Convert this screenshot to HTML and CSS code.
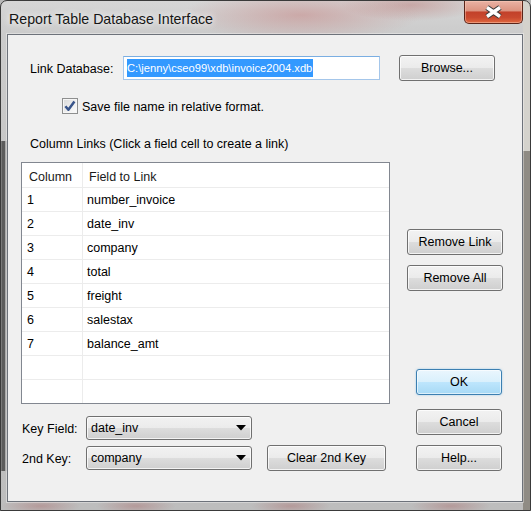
FILE: index.html
```html
<!DOCTYPE html>
<html>
<head>
<meta charset="utf-8">
<title>Report Table Database Interface</title>
<link rel="stylesheet" href="styles.css">
</head>
<body>
<div class="window">
  <div class="titlebar">
    <span class="title">Report Table Database Interface</span>
    <div class="close">
      <svg width="19" height="14" viewBox="0 0 19 14">
        <path d="M3 2.5 L16 11.5 M16 2.5 L3 11.5" stroke="#3a3a3a" stroke-width="5.6" fill="none"/>
        <path d="M3 2.5 L16 11.5 M16 2.5 L3 11.5" stroke="#ffffff" stroke-width="3.4" fill="none"/>
      </svg>
    </div>
  </div>
  <div class="client">
    <div class="link-row">
      <span class="link-lbl">Link Database:</span>
      <div class="textbox"><span class="sel">C:\jenny\cseo99\xdb\invoice2004.xdb</span></div>
      <div class="btn browse">Browse...</div>
    </div>
    <div class="check-row">
      <span class="checkbox">
        <svg width="14" height="14" viewBox="0 0 14 14">
          <path d="M2.4 7.2 L5.4 10.8 L11.4 2.6" stroke="#39548a" stroke-width="2.5" fill="none" stroke-linejoin="round"/>
        </svg>
      </span>
      <span class="check-lbl">Save file name in relative format.</span>
    </div>
    <div class="section-lbl">Column Links (Click a field cell to create a link)</div>
    <div class="main">
      <div class="left">
        <div class="grid">
          <div class="gr head"><div class="c1">Column</div><div class="c2">Field to Link</div></div>
          <div class="gr"><div class="c1">1</div><div class="c2">number_invoice</div></div>
          <div class="gr"><div class="c1">2</div><div class="c2">date_inv</div></div>
          <div class="gr"><div class="c1">3</div><div class="c2">company</div></div>
          <div class="gr"><div class="c1">4</div><div class="c2">total</div></div>
          <div class="gr"><div class="c1">5</div><div class="c2">freight</div></div>
          <div class="gr"><div class="c1">6</div><div class="c2">salestax</div></div>
          <div class="gr"><div class="c1">7</div><div class="c2">balance_amt</div></div>
          <div class="gr"><div class="c1"></div><div class="c2"></div></div>
          <div class="gr"><div class="c1"></div><div class="c2"></div></div>
        </div>
        <div class="keyrow kr1">
          <span class="klbl">Key Field:</span>
          <div class="combo"><span class="ctext">date_inv</span>
            <svg class="arrow" width="10" height="6" viewBox="0 0 10 6"><path d="M0 0 H10 L5 5.5 Z" fill="#000"/></svg>
          </div>
        </div>
        <div class="keyrow kr2">
          <span class="klbl">2nd Key:</span>
          <div class="combo"><span class="ctext">company</span>
            <svg class="arrow" width="10" height="6" viewBox="0 0 10 6"><path d="M0 0 H10 L5 5.5 Z" fill="#000"/></svg>
          </div>
          <div class="btn clear">Clear 2nd Key</div>
        </div>
      </div>
      <div class="right">
        <div class="btn wide rl">Remove Link</div>
        <div class="btn wide ra">Remove All</div>
        <div class="btn narrow ok">OK</div>
        <div class="btn narrow cancel">Cancel</div>
        <div class="btn narrow help">Help...</div>
      </div>
    </div>
  </div>
</div>
</body>
</html>
```

FILE: styles.css
```css
html, body {
  margin: 0;
  padding: 0;
  background: #b8b8b8;
}

body {
  font-family: "Liberation Sans", Arial, sans-serif;
  font-size: 12.5px;
  color: #000;
}

.window {
  width: 531px;
  height: 511px;
  box-sizing: border-box;
  border: 1px solid #3a3a3a;
  border-radius: 7px 7px 0 0;
  padding: 0 7px 8px 6px;
  display: flex;
  flex-direction: column;
  overflow: hidden;
  background:
    radial-gradient(ellipse 120px 26px at 300px 14px, rgba(196, 120, 118, 0.45), rgba(196, 120, 118, 0)),
    radial-gradient(ellipse 70px 16px at 410px 4px, rgba(180, 100, 96, 0.4), rgba(180, 100, 96, 0)),
    radial-gradient(ellipse 40px 8px at 40px 505px, rgba(170, 110, 110, 0.45), rgba(170, 110, 110, 0)),
    radial-gradient(ellipse 40px 8px at 135px 505px, rgba(170, 110, 110, 0.45), rgba(170, 110, 110, 0)),
    radial-gradient(ellipse 40px 8px at 290px 505px, rgba(170, 110, 110, 0.45), rgba(170, 110, 110, 0)),
    radial-gradient(ellipse 40px 8px at 450px 505px, rgba(170, 110, 110, 0.45), rgba(170, 110, 110, 0)),
    linear-gradient(to bottom, #d4d2cc 0, #d4d2cc 150px, #8f8b84 150px) right top / 7px 100% no-repeat,
    linear-gradient(to right, #7a7a7a 0, #7a7a7a 1px, #5c5c5c 1px, #5c5c5c 4px, #a9a9a9 4px) left 140px / 6px 330px no-repeat,
    linear-gradient(to bottom, #d6d6d6 0, #cbcbcb 34px, #c2c2c2 300px, #bdbdbd 100%);
}

.titlebar {
  height: 33px;
  flex: none;
  display: flex;
  justify-content: space-between;
  align-items: flex-start;
  padding-left: 2px;
}

.title {
  margin-top: 10px;
  font-size: 14.2px;
  line-height: 17px;
  color: #151515;
  text-shadow: 0 0 6px rgba(255, 255, 255, 0.9), 0 0 10px rgba(255, 255, 255, 0.7);
}

.close {
  width: 59px;
  height: 23px;
  box-sizing: border-box;
  border: 1px solid #5a2419;
  border-top: none;
  border-radius: 0 0 5px 5px;
  background: linear-gradient(to bottom, #e9b2a4 0%, #dc9380 45%, #c2412a 50%, #c9492f 75%, #e0683f 100%);
  box-shadow: inset 0 0 0 1px rgba(255, 210, 190, 0.45);
  display: flex;
  align-items: center;
  justify-content: center;
}

.client {
  flex: 1;
  border: 1px solid #6d727a;
  background: #f0f0f0;
  box-shadow: 0 0 0 1px rgba(255, 255, 255, 0.35);
  display: flex;
  flex-direction: column;
}

.link-row {
  margin-top: 20px;
  height: 26px;
  padding-left: 22px;
  display: flex;
  align-items: center;
}

.link-lbl {
  width: 93px;
  padding-top: 1px;
}

.textbox {
  width: 257px;
  height: 24px;
  box-sizing: border-box;
  border: 1px solid #a4c6ea;
  border-top-color: #7aaee2;
  background: #fff;
  padding-left: 3px;
  display: flex;
  align-items: center;
}

.sel {
  background: #3399ff;
  color: #fff;
  font-size: 11.2px;
  line-height: 18px;
  padding: 0 1px 0 0;
}

.btn {
  height: 26px;
  box-sizing: border-box;
  border: 1px solid #707070;
  border-radius: 3px;
  background: linear-gradient(to bottom, #f2f2f2 0%, #ebebeb 50%, #dddddd 50%, #cfcfcf 100%);
  box-shadow: inset 0 0 0 1px rgba(255, 255, 255, 0.75);
  display: flex;
  align-items: center;
  justify-content: center;
  color: #000;
}

.browse {
  margin-left: 19px;
  width: 96px;
}

.check-row {
  margin-top: 17px;
  height: 16px;
  padding-left: 54px;
  display: flex;
  align-items: center;
}

.checkbox {
  width: 16px;
  height: 16px;
  box-sizing: border-box;
  border: 1px solid #8e8f8f;
  background: linear-gradient(135deg, #d8d8d8 0%, #f0f0f0 60%, #fbfbfb 100%);
  box-shadow: inset 0 0 0 1px #f6f6f6;
  display: flex;
  align-items: center;
  justify-content: center;
}

.check-lbl {
  margin-left: 4px;
  padding-top: 1px;
}

.section-lbl {
  margin-top: 21px;
  line-height: 16px;
  padding-top: 1px;
  padding-left: 22px;
}

.main {
  margin-top: 10px;
  display: flex;
}

.left {
  padding-left: 13px;
  width: 369px;
}

.grid {
  width: 369px;
  box-sizing: border-box;
  border: 1px solid #828790;
  background: #fff;
}

.gr {
  display: flex;
  height: 24px;
  box-sizing: border-box;
  border-bottom: 1px solid #ececec;
  line-height: 22px;
  padding-top: 1px;
}

.gr:last-child {
  height: 23px;
  border-bottom: none;
}

.gr.head {
  height: 25px;
  line-height: 24px;
  padding-top: 2px;
  color: #1a1a1a;
}

.c1 {
  width: 61px;
  box-sizing: border-box;
  border-right: 1px solid #ececec;
  padding-left: 5px;
  margin-top: -1px;
  padding-top: 1px;
}

.c2 {
  padding-left: 4px;
}

.head .c1 {
  padding-left: 7px;
  margin-top: -2px;
  padding-top: 2px;
}

.head .c2 {
  padding-left: 6px;
}

.keyrow {
  display: flex;
  align-items: center;
  padding-left: 1px;
}

.kr1 {
  margin-top: 12px;
  height: 24px;
}

.kr2 {
  margin-top: 5px;
  height: 26px;
}

.klbl {
  width: 64px;
  padding-top: 1px;
}

.combo {
  width: 166px;
  height: 24px;
  box-sizing: border-box;
  border: 1px solid #707070;
  border-radius: 3px;
  background: linear-gradient(to bottom, #f2f2f2 0%, #ebebeb 50%, #dddddd 50%, #cfcfcf 100%);
  box-shadow: inset 0 0 0 1px rgba(255, 255, 255, 0.75);
  display: flex;
  align-items: center;
  justify-content: space-between;
  padding: 0 5px 0 4px;
}

.arrow {
  display: block;
}

.clear {
  margin-left: 15px;
  width: 119px;
}

.right {
  margin-left: 17px;
  display: flex;
  flex-direction: column;
  align-items: flex-start;
}

.wide {
  width: 96px;
}

.narrow {
  width: 86px;
  margin-left: 9px;
}

.rl {
  margin-top: 67px;
}

.ra {
  margin-top: 10px;
}

.ok {
  margin-top: 78px;
  border-color: #3c7fb1;
  background: linear-gradient(to bottom, #eaf6fd 0%, #d9f0fc 50%, #bee6fd 50%, #a7d9f5 100%);
  box-shadow: inset 0 0 0 1px rgba(255, 255, 255, 0.6), 0 0 2px rgba(60, 160, 230, 0.5);
}

.cancel {
  margin-top: 14px;
}

.help {
  margin-top: 10px;
}
```
